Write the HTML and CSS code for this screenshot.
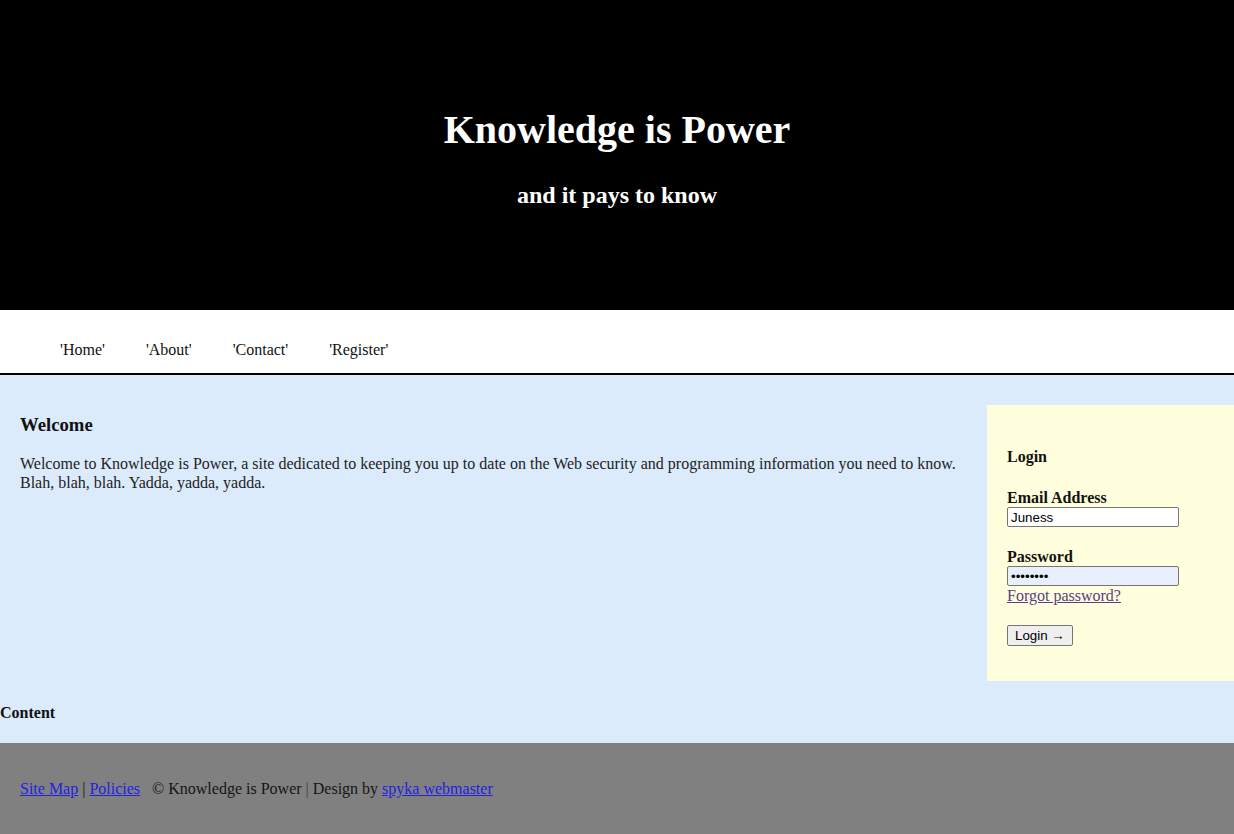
FILE: index.html
```html
<!DOCTYPE html>
<html>
<head>
<meta charset="utf-8">
<title>Knowledge is Power</title>
<link rel="stylesheet" href="styles.css">
</head>
<body>
<header class="masthead">
  <h1 class="title">Knowledge is Power</h1>
  <h2 class="subtitle">and it pays to know</h2>
</header>
<nav class="nav">
  <a class="nav-item" href="#">'Home'</a>
  <a class="nav-item" href="#">'About'</a>
  <a class="nav-item" href="#">'Contact'</a>
  <a class="nav-item" href="#">'Register'</a>
</nav>
<div class="main">
  <div class="row">
    <section class="content">
      <h3 class="content-title">Welcome</h3>
      <p class="content-text">Welcome to Knowledge is Power, a site dedicated to keeping you up to date on the Web security and programming information you need to know. Blah, blah, blah. Yadda, yadda, yadda.</p>
    </section>
    <aside class="sidebar">
      <h4 class="side-title">Login</h4>
      <form class="login">
        <label class="field-label" for="email">Email Address</label>
        <input class="field" id="email" type="text" value="Juness">
        <label class="field-label gap" for="pw">Password</label>
        <input class="field autofill" id="pw" type="password" value="password">
        <a class="forgot" href="#">Forgot password?</a>
        <button class="btn" type="button">Login &#x2192;</button>
      </form>
    </aside>
  </div>
  <h4 class="content-label">Content</h4>
</div>
<footer class="footer">
  <p class="footer-text"><a href="#" class="flink">Site Map</a> | <a href="#" class="flink">Policies</a><span class="copy">&copy; Knowledge is Power <span class="sep">|</span> Design by <a href="#" class="flink">spyka webmaster</a></span></p>
</footer>
</body>
</html>
```
FILE: styles.css
```css
html, body {
  margin: 0;
  padding: 0;
}
body {
  font-family: "Liberation Serif", "Times New Roman", serif;
  font-size: 16px;
  color: #111;
  background: #808080;
}
.masthead {
  background: #000;
  color: #fff;
  height: 310px;
  box-sizing: border-box;
  padding-top: 105px;
  text-align: center;
}
.title {
  font-size: 40px;
  margin: 0;
  line-height: 50px;
}
.subtitle {
  font-size: 24px;
  margin: 26px 0 0;
  line-height: 28px;
}
.nav {
  background: #fff;
  box-sizing: border-box;
  padding: 31px 0 0 60px;
  border-bottom: 2px solid #000;
  height: 65px;
  display: flex;
  gap: 41px;
}
.nav-item {
  color: #111;
  text-decoration: none;
  line-height: 18px;
}
.main {
  background: #dbebfc;
  overflow: hidden;
}
.row {
  display: flex;
  align-items: flex-start;
}
.content {
  flex: 1;
  padding: 21px 20px 20px;
}
.content-title {
  font-size: 18.72px;
  margin: 18px 0;
}
.content-text {
  margin: 0;
  line-height: 19px;
  color: #222;
}
.sidebar {
  width: 247px;
  box-sizing: border-box;
  margin-top: 30px;
  background: #ffffdd;
  padding: 20px 20px 35px;
}
.side-title {
  margin: 23px 0 23px;
  font-size: 16px;
  line-height: 18px;
}
.login {
  display: flex;
  flex-direction: column;
  align-items: flex-start;
}
.field-label {
  font-weight: bold;
  line-height: 18px;
}
.field-label.gap {
  margin-top: 21px;
}
.field {
  width: 172px;
  height: 20px;
  box-sizing: border-box;
  margin: 0;
  border: 1px solid #767676;
  border-radius: 2px;
  padding: 1px 3px;
  font-family: "Liberation Sans", Arial, sans-serif;
  font-size: 13.33px;
  background: #fff;
}
.field.autofill {
  background: #e8f0fe;
}
.forgot {
  color: #5a3d88;
  margin-top: 1px;
  line-height: 18px;
}
.btn {
  margin-top: 20px;
  height: 21px;
  padding: 1px 7px;
  font-family: "Liberation Sans", Arial, sans-serif;
  font-size: 13.33px;
  background: #efefef;
  border: 1px solid #767676;
  border-radius: 2px;
  color: #000;
}
.content-label {
  margin: 23px 0 21px;
  font-size: 16px;
  line-height: 18px;
}
.footer {
  background: #808080;
  padding: 21px 20px 20px;
}
.footer-text {
  margin: 16px 0;
  line-height: 18px;
  color: #151515;
}
.flink {
  color: #2020e6;
}
.copy {
  margin-left: 12px;
}
.sep {
  color: #444;
}
```
